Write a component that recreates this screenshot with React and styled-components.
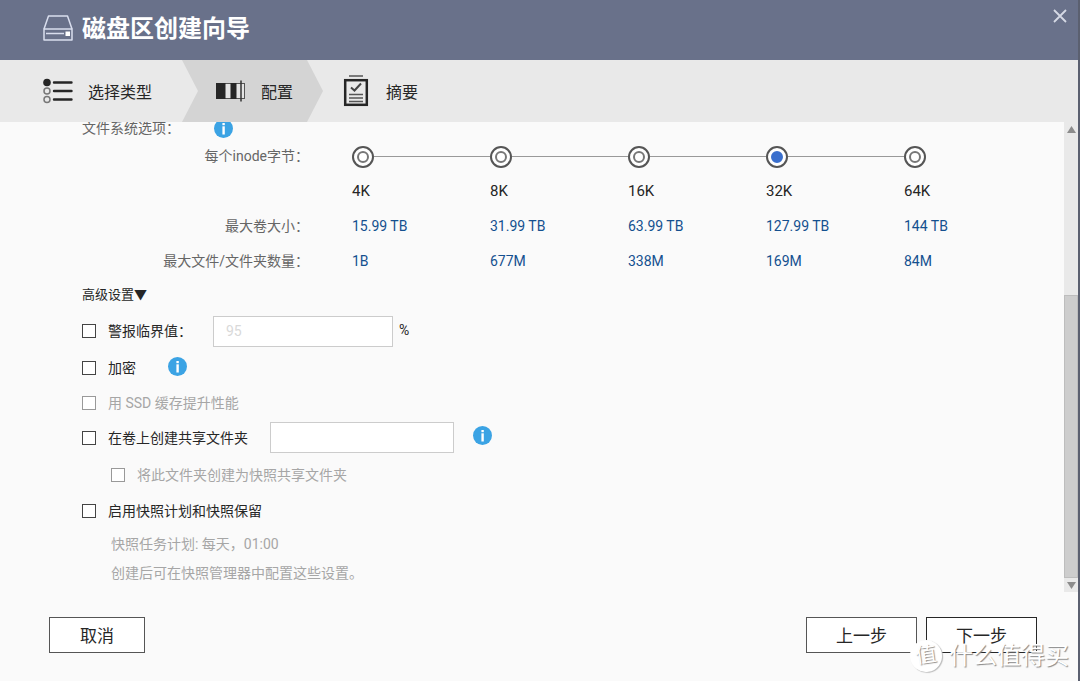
import React, { useState } from "react";
import styled, { createGlobalStyle } from "styled-components";

const OPTIONS = [
  { inode: "4K", size: "15.99 TB", files: "1B" },
  { inode: "8K", size: "31.99 TB", files: "677M" },
  { inode: "16K", size: "63.99 TB", files: "338M" },
  { inode: "32K", size: "127.99 TB", files: "169M" },
  { inode: "64K", size: "144 TB", files: "84M" },
];

export default function App() {
  return (
    <Wizard>
      <GlobalStyle />
      <Header>
        <DriveIcon />
        <Title>磁盘区创建向导</Title>
        <CloseButton type="button" aria-label="关闭">
          <CloseIcon />
        </CloseButton>
      </Header>
      <Steps>
        <FirstStep>
          <ListIcon />
          选择类型
        </FirstStep>
        <ActiveStep aria-current="step">
          <ConfigIcon />
          配置
        </ActiveStep>
        <LastStep>
          <SummaryIcon />
          摘要
        </LastStep>
      </Steps>
      <Body>
        <Content>
          <FileSystemOptions />
          <AdvancedSettings />
        </Content>
        <Scrollbar />
      </Body>
      <Footer>
        <CancelButton type="button">取消</CancelButton>
        <StepButton type="button">上一步</StepButton>
        <NextButton type="button">下一步</NextButton>
      </Footer>
      <Watermark aria-hidden="true">
        <WatermarkBadge>值</WatermarkBadge>
        什么值得买
      </Watermark>
    </Wizard>
  );
}

function FileSystemOptions() {
  const [inode, setInode] = useState("32K");

  return (
    <>
      <SectionRow>
        <SectionLabel>文件系统选项：</SectionLabel>
        <InfoIcon />
      </SectionRow>
      <InodeTable>
        <tbody>
          <tr>
            <RowLabel scope="row">每个inode字节：</RowLabel>
            {OPTIONS.map((option, index) => (
              <Cell key={option.inode}>
                <RadioTrack>
                  <Radio
                    type="radio"
                    name="inode"
                    id={`inode-${option.inode}`}
                    checked={inode === option.inode}
                    onChange={() => setInode(option.inode)}
                  />
                  {index < OPTIONS.length - 1 && <TrackLine />}
                </RadioTrack>
              </Cell>
            ))}
          </tr>
          <tr>
            <Cell />
            {OPTIONS.map((option) => (
              <TextCell key={option.inode}>
                <InodeLabel htmlFor={`inode-${option.inode}`}>
                  {option.inode}
                </InodeLabel>
              </TextCell>
            ))}
          </tr>
          <tr>
            <RowLabel scope="row">最大卷大小：</RowLabel>
            {OPTIONS.map((option) => (
              <ValueCell key={option.inode}>{option.size}</ValueCell>
            ))}
          </tr>
          <tr>
            <RowLabel scope="row">最大文件/文件夹数量：</RowLabel>
            {OPTIONS.map((option) => (
              <ValueCell key={option.inode}>{option.files}</ValueCell>
            ))}
          </tr>
        </tbody>
      </InodeTable>
    </>
  );
}

function AdvancedSettings() {
  return (
    <>
      <AdvancedToggle type="button" aria-expanded="true">
        高级设置▼
      </AdvancedToggle>
      <OptionRow $height={40}>
        <Checkbox type="checkbox" id="alert" />
        <OptionLabel htmlFor="alert" $width={105}>
          警报临界值：
        </OptionLabel>
        <TextInput
          $width={180}
          type="text"
          placeholder="95"
          aria-label="警报临界值"
          disabled
        />
        <Unit>%</Unit>
      </OptionRow>
      <OptionRow $height={34}>
        <Checkbox type="checkbox" id="encrypt" />
        <OptionLabel htmlFor="encrypt" $width={60}>
          加密
        </OptionLabel>
        <InfoIcon />
      </OptionRow>
      <OptionRow $height={35}>
        <Checkbox type="checkbox" id="ssd" disabled />
        <OptionLabel htmlFor="ssd" $disabled>
          用 SSD 缓存提升性能
        </OptionLabel>
      </OptionRow>
      <OptionRow $height={35}>
        <Checkbox type="checkbox" id="share" />
        <OptionLabel htmlFor="share" $width={162}>
          在卷上创建共享文件夹
        </OptionLabel>
        <TextInput $width={184} $gap={19} type="text" aria-label="共享文件夹" />
        <InfoIcon />
      </OptionRow>
      <OptionRow $height={40} $nested>
        <Checkbox type="checkbox" id="snapshot-share" disabled />
        <OptionLabel htmlFor="snapshot-share" $disabled>
          将此文件夹创建为快照共享文件夹
        </OptionLabel>
      </OptionRow>
      <OptionRow $height={32}>
        <Checkbox type="checkbox" id="snapshot" />
        <OptionLabel htmlFor="snapshot">启用快照计划和快照保留</OptionLabel>
      </OptionRow>
      <Notes>
        <Note>快照任务计划: 每天，01:00</Note>
        <Note>创建后可在快照管理器中配置这些设置。</Note>
      </Notes>
    </>
  );
}

function Scrollbar() {
  return (
    <ScrollbarWrapper aria-hidden="true">
      <ScrollArrow>
        <svg width="9" height="7" viewBox="0 0 9 7">
          <path d="M4.500 0L9 7H0Z" fill="#8c8c8c" />
        </svg>
      </ScrollArrow>
      <ScrollTrack>
        <ScrollThumb />
      </ScrollTrack>
      <ScrollArrow>
        <svg width="9" height="7" viewBox="0 0 9 7">
          <path d="M4.500 7L9 0H0Z" fill="#8c8c8c" />
        </svg>
      </ScrollArrow>
    </ScrollbarWrapper>
  );
}

function DriveIcon() {
  return (
    <svg width="30" height="27" viewBox="0 0 30 27" fill="none">
      <g stroke="#d9deee" strokeWidth="1.500" strokeLinejoin="round">
        <path d="M1 14L5.500 1H24.500L29 14" />
        <rect x="1" y="14" width="28" height="11" />
        <path d="M3 18.500H21" />
      </g>
      <rect x="22.500" y="16.500" width="4.500" height="4.500" fill="#fff" />
    </svg>
  );
}

function CloseIcon() {
  return (
    <svg width="14" height="14" viewBox="0 0 14 14">
      <path d="M1 1L13 13M13 1L1 13" stroke="#d5d9e5" strokeWidth="1.800" />
    </svg>
  );
}

function ListIcon() {
  return (
    <svg width="30" height="26" viewBox="0 0 30 26" fill="none">
      <circle cx="4" cy="4.500" r="3.800" fill="#262626" />
      <circle cx="4" cy="13" r="3" stroke="#777" strokeWidth="1.500" />
      <circle cx="4" cy="21.500" r="3" stroke="#777" strokeWidth="1.500" />
      <path
        d="M11 4.500H28.500M11 13H28.500M11 21.500H28.500"
        stroke="#262626"
        strokeWidth="2.400"
        strokeLinecap="round"
      />
    </svg>
  );
}

function ConfigIcon() {
  return (
    <svg width="30" height="22" viewBox="0 0 30 22">
      <rect x="0.500" y="3.500" width="28" height="15" fill="#e4e4e4" stroke="#555" />
      <rect x="0" y="3" width="9.500" height="16" fill="#262626" />
      <rect x="14.500" y="3" width="6" height="16" fill="#262626" />
      <path d="M25 0.500V21.500" stroke="#333" strokeWidth="1.500" />
    </svg>
  );
}

function SummaryIcon() {
  return (
    <svg width="26" height="32" viewBox="0 0 26 32" fill="none">
      <path d="M6 1H20" stroke="#555" strokeWidth="1.500" />
      <rect x="2.200" y="5.200" width="21.600" height="24.600" stroke="#262626" strokeWidth="2.500" />
      <path d="M8 12.500L11.500 15.500L18 8.500" stroke="#444" strokeWidth="2" />
      <path d="M6 19.500H20M6 23H20M6 26.500H20" stroke="#555" strokeWidth="1.300" />
    </svg>
  );
}

function InfoIcon() {
  return (
    <svg width="20" height="20" viewBox="0 0 20 20" role="img" aria-label="信息">
      <circle cx="9.500" cy="9.500" r="9.500" fill="#3ba3e4" />
      <rect x="8.400" y="4" width="2.400" height="2.200" fill="#fff" />
      <rect x="8.400" y="7.300" width="2.400" height="8.200" fill="#fff" />
    </svg>
  );
}

const GlobalStyle = createGlobalStyle`
  *,
  *::before {
    box-sizing: border-box;
  }

  body {
    margin: 0;
    background-color: #fafafa;
  }

  body, button, input {
    font-family: Roboto, "Noto Sans CJK SC", sans-serif;
    font-size: 14px;
    color: #262626;
  }

  svg {
    flex-shrink: 0;
  }
`;

const Wizard = styled.div`
  position: relative;
  display: flex;
  flex-direction: column;
  min-height: 100vh;
  border-right: 2px solid #5b6070;
  background-color: #fafafa;
`;

const Header = styled.header`
  display: flex;
  align-items: center;
  gap: 9px;
  height: 60px;
  padding: 0 11px 4px 43px;
  background-color: #69718a;
`;

const Title = styled.h1`
  flex: 1;
  margin: 0;
  padding-top: 2px;
  font-size: 24px;
  font-weight: 700;
  line-height: 32px;
  color: #fff;
`;

const CloseButton = styled.button`
  display: flex;
  align-self: flex-start;
  margin-top: 9px;
  padding: 0;
  border: none;
  background: none;
  cursor: pointer;
`;

const Steps = styled.ol`
  display: flex;
  height: 62px;
  margin: 0;
  padding: 0;
  list-style: none;
  background-color: #e9e9e9;
`;

const Step = styled.li`
  display: flex;
  align-items: center;
  gap: 15px;
  font-size: 16px;
`;

const FirstStep = styled(Step)`
  width: 182px;
  padding-left: 43px;
`;

const ActiveStep = styled(Step)`
  width: 141px;
  padding-left: 34px;
  background-color: #d4d4d4;
  clip-path: polygon(
    0 0,
    calc(100% - 16px) 0,
    100% 50%,
    calc(100% - 16px) 100%,
    0 100%,
    16px 50%
  );
`;

const LastStep = styled(Step)`
  gap: 17px;
  padding-left: 20px;
`;

const Body = styled.main`
  display: flex;
  flex: 1;
`;

const Content = styled.div`
  flex: 1;
  padding-left: 82px;
  overflow: hidden;
`;

const SectionRow = styled.div`
  display: flex;
  align-items: flex-end;
  height: 17px;
`;

const SectionLabel = styled.span`
  width: 132px;
  line-height: 22px;
  color: #666;
`;

const InodeTable = styled.table`
  table-layout: fixed;
  width: 960px;
  max-width: 100%;
  border-collapse: collapse;

  tr > :first-child {
    width: 270px;
  }
`;

const Cell = styled.td`
  width: 138px;
  height: 35px;
  padding: 0;
`;

const RowLabel = styled.th`
  padding: 0 43px 4px 0;
  font-weight: 400;
  text-align: right;
  white-space: nowrap;
  color: #666;
`;

const RadioTrack = styled.div`
  display: flex;
  align-items: center;
`;

const Radio = styled.input`
  appearance: none;
  flex-shrink: 0;
  display: grid;
  place-items: center;
  width: 22px;
  height: 22px;
  margin: 0;
  border: 2px solid #555;
  border-radius: 50%;
  background-color: #fff;

  &::before {
    content: "";
    width: 12px;
    height: 12px;
    border: 2px solid #777;
    border-radius: 50%;
  }

  &:checked::before {
    border-color: #3a6fcd;
    background-color: #3a6fcd;
  }
`;

const TrackLine = styled.span`
  flex: 1;
  height: 1px;
  background-color: #999;
`;

const TextCell = styled(Cell)`
  padding-bottom: 2px;
`;

const InodeLabel = styled.label`
  font-size: 15px;
`;

const ValueCell = styled(TextCell)`
  color: #14508f;
`;

const AdvancedToggle = styled.button`
  display: block;
  height: 32px;
  padding: 0 0 4px;
  border: none;
  background: none;
  font-size: 13px;
  cursor: pointer;
`;

const OptionRow = styled.div`
  display: flex;
  align-items: center;
  height: ${({ $height }) => $height}px;
  padding-left: ${({ $nested }) => ($nested ? 29 : 0)}px;

  svg {
    margin-bottom: 3px;
  }
`;

const Checkbox = styled.input`
  appearance: none;
  flex-shrink: 0;
  width: 14px;
  height: 14px;
  margin: 0 12px 0 0;
  border: 1px solid #444;
  background-color: #fff;

  &:checked {
    background-color: #3a6fcd;
  }

  &:disabled {
    border-color: #999;
  }
`;

const OptionLabel = styled.label`
  min-width: ${({ $width }) => ($width ? `${$width}px` : "auto")};
  padding-bottom: 2px;
  color: ${({ $disabled }) => ($disabled ? "#a6a6a6" : "#262626")};
`;

const TextInput = styled.input`
  width: ${({ $width }) => $width}px;
  height: 31px;
  margin-right: ${({ $gap }) => $gap || 6}px;
  padding: 0 12px;
  border: 1px solid #ccc;
  background-color: #fff;

  &::placeholder {
    color: #d9d9d9;
  }
`;

const Unit = styled.span`
  padding-bottom: 2px;
`;

const Notes = styled.div`
  padding: 3px 0 0 29px;
  color: #a6a6a6;
`;

const Note = styled.p`
  margin: 0;
  line-height: 29px;
`;

const ScrollbarWrapper = styled.div`
  display: flex;
  flex-direction: column;
  width: 14px;
  background-color: #e9e9e9;
`;

const ScrollArrow = styled.div`
  display: flex;
  align-items: center;
  justify-content: center;
  height: 14px;
`;

const ScrollTrack = styled.div`
  display: flex;
  flex: 1;
  flex-direction: column;
  justify-content: flex-end;
`;

const ScrollThumb = styled.div`
  height: 64%;
  border: 1px solid #bdbdbd;
  background-color: #cdcdcd;
`;

const Footer = styled.footer`
  display: flex;
  gap: 9px;
  padding: 25px 41px 28px 49px;
`;

const FooterButton = styled.button`
  height: 36px;
  padding: 0 0 2px;
  border: 1px solid #555;
  background-color: #fff;
  font-size: 17px;
  cursor: pointer;
`;

const CancelButton = styled(FooterButton)`
  width: 96px;
  margin-right: auto;
`;

const StepButton = styled(FooterButton)`
  width: 111px;
`;

const NextButton = styled(StepButton)`
  border-color: #262626;
`;

const Watermark = styled.div`
  position: absolute;
  right: 9px;
  bottom: 9px;
  display: flex;
  align-items: center;
  gap: 7px;
  font-size: 24px;
  line-height: 32px;
  color: #fff;
  text-shadow: 1px 1px 1px #888;
  pointer-events: none;
`;

const WatermarkBadge = styled.span`
  width: 32px;
  height: 32px;
  border-radius: 50%;
  background-color: #fff;
  box-shadow: 1px 1px 1px #bbb;
  font-size: 21px;
  line-height: 30px;
  text-align: center;
  transform: rotate(-8deg);
`;
